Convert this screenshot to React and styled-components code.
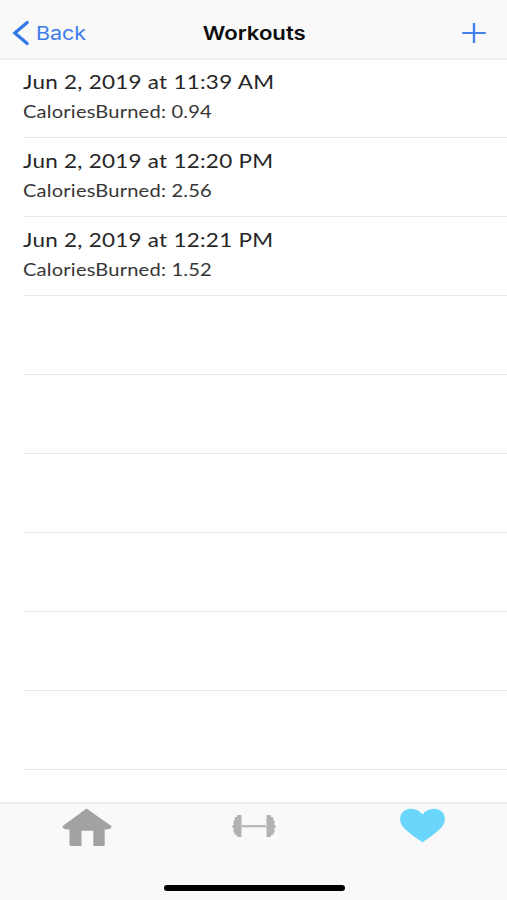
import React from "react";
import styled, { createGlobalStyle } from "styled-components";

const GlobalStyle = createGlobalStyle`
  body {
    margin: 0;
    background: #fff;
  }

  * {
    box-sizing: border-box;
  }
`;

const Screen = styled.div`
  display: flex;
  flex-direction: column;
  width: 507px;
  height: 900px;
  overflow: hidden;
  background: #fff;
`;

const NavBar = styled.header`
  display: grid;
  grid-template-columns: 1fr auto 1fr;
  align-items: center;
  height: 60px;
  padding: 8px 21px 0 12px;
  background: #f9f9f9;
  border-bottom: 2px solid #efeff0;
  font-family: Inter, "Liberation Sans", sans-serif;
  font-size: 19px;
  line-height: 24px;
`;

const BackButton = styled.a`
  display: flex;
  align-items: center;
  gap: 6px;
  color: #3b7ceb;
`;

const Wide = styled.span`
  display: block;
  padding-top: ${props => props.$drop || 0}px;
  transform: scaleX(${props => props.$scale});
  transform-origin: ${props => props.$origin || "left"};
  white-space: nowrap;
`;

const NavTitle = styled.h1`
  margin: 0 0 0 10px;
  color: #0c0c0c;
  font-size: 19px;
  font-weight: 600;
`;

const AddButton = styled.a`
  justify-self: end;
  display: flex;
`;

const List = styled.main`
  flex: 1;
  overflow: hidden;
  padding-left: 23px;
`;

const Row = styled.div`
  height: 79px;
  padding-top: 9px;
  border-bottom: 1px solid #e9e9ea;
  color: #262626;
  font-family: Lato, "Liberation Sans", sans-serif;

  &:first-child {
    height: 78px;
    padding-top: 8px;
  }
`;

const Date = styled.div`
  font-size: 19px;
  line-height: 28px;
  letter-spacing: 0.22px;
`;

const Calories = styled.div`
  margin-top: 3px;
  color: #363636;
  font-size: 17px;
  line-height: 26px;
  letter-spacing: 0.17px;
`;

const TabBar = styled.footer`
  display: flex;
  flex-direction: column;
  justify-content: space-between;
  align-items: center;
  height: 98px;
  padding-bottom: 9px;
  background: #f9f9f9;
  border-top: 2px solid #eeeeef;
`;

const Tabs = styled.nav`
  display: grid;
  grid-template-columns: 62px 50px 119px 46px 122px 48px 60px;
  width: 100%;
  padding-top: 4px;
`;

const Tab = styled.a`
  grid-column: ${props => props.$column};
  display: flex;
`;

const HomeIndicator = styled.div`
  width: 181px;
  height: 6px;
  margin-left: 1px;
  border-radius: 3px;
  background: #000;
`;

const workouts = [
  { date: "Jun 2, 2019 at 11:39 AM", calories: "0.94" },
  { date: "Jun 2, 2019 at 12:20 PM", calories: "2.56" },
  { date: "Jun 2, 2019 at 12:21 PM", calories: "1.52" }
];

const emptyRows = [0, 1, 2, 3, 4, 5];

const BackIcon = () => (
  <svg width="18" height="26" viewBox="0 0 18 26">
    <path
      d="M15.2 2.5 2.8 13l12.4 10.5"
      fill="none"
      stroke="#3478e8"
      strokeWidth="3.2"
      strokeLinecap="round"
      strokeLinejoin="miter"
    />
  </svg>
);

const PlusIcon = () => (
  <svg width="24" height="22" viewBox="0 0 24 22">
    <path d="M.3 11h23.4" stroke="#4380ec" strokeWidth="2" />
    <path d="M12 1v20" stroke="#4380ec" strokeWidth="2.4" />
  </svg>
);

const HomeIcon = () => (
  <svg width="50" height="40" viewBox="0 0 50 40">
    <path
      d="M24.5.5 49.3 18q.7.9-.2 1.7L47 21.2l-4.3.2v15.4q0 1.2-1.2 1.2H31.3V22.8H19.5V38H8.7q-1.2 0-1.2-1.2V21.4l-4.5-.2L.9 19.7Q0 18.8.7 18z"
      fill="#a2a2a2"
    />
  </svg>
);

const DumbbellIcon = () => (
  <svg width="46" height="40" viewBox="0 0 46 40">
    <path d="M11 18.2h24" stroke="#b5b5b5" strokeWidth="2.2" />
    <path
      d="M10.5 7h-3.8q-.7 0-.7.7V9H4.5q-.8 0-.8.8V12l-1.2.8v4.4L1 18v1l1.5.8v4.4l1.2.8v1.2q0 .8.8.8H6v1.3q0 .7.7.7h3.8zM35.5 7h3.8q.7 0 .7.7V9h1.5q.8 0 .8.8V12l1.2.8v4.4l1.5.8v1l-1.5.8v4.4l-1.2.8v1.2q0 .8-.8.8H40v1.3q0 .7-.7.7h-3.8z"
      fill="#b2b2b2"
    />
  </svg>
);

const HeartIcon = () => (
  <svg width="48" height="40" viewBox="0 0 48 40">
    <path
      d="M23.5 34.6C19 31 10 25.6 4.6 19.6.6 15.1.3 9.6 2.4 6c2.3-4 6.6-5.4 11-5.1 4.5.3 8 2.4 10.1 5.6C25.6 3.3 29.1 1.2 33.6.9c4.4-.3 8.7 1.1 11 5.1 2.1 3.6 1.8 9.1-2.2 13.6C37 25.6 28 31 23.5 34.6z"
      fill="#6ad6fb"
    />
  </svg>
);

const App = () => (
  <>
    <GlobalStyle />
    <Screen>
      <NavBar>
        <BackButton>
          <BackIcon />
          <Wide $scale={1.13} $drop={2}>
            Back
          </Wide>
        </BackButton>
        <NavTitle>
          <Wide $scale={1.165} $drop={2} $origin="center">
            Workouts
          </Wide>
        </NavTitle>
        <AddButton>
          <PlusIcon />
        </AddButton>
      </NavBar>
      <List>
        {workouts.map(({ date, calories }) => (
          <Row key={date}>
            <Date>
              <Wide $scale={1.182}>{date}</Wide>
            </Date>
            <Calories>
              <Wide $scale={1.182}>CaloriesBurned: {calories}</Wide>
            </Calories>
          </Row>
        ))}
        {emptyRows.map(row => (
          <Row key={row} />
        ))}
      </List>
      <TabBar>
        <Tabs>
          <Tab $column={2}>
            <HomeIcon />
          </Tab>
          <Tab $column={4}>
            <DumbbellIcon />
          </Tab>
          <Tab $column={6}>
            <HeartIcon />
          </Tab>
        </Tabs>
        <HomeIndicator />
      </TabBar>
    </Screen>
  </>
);

export default App;
